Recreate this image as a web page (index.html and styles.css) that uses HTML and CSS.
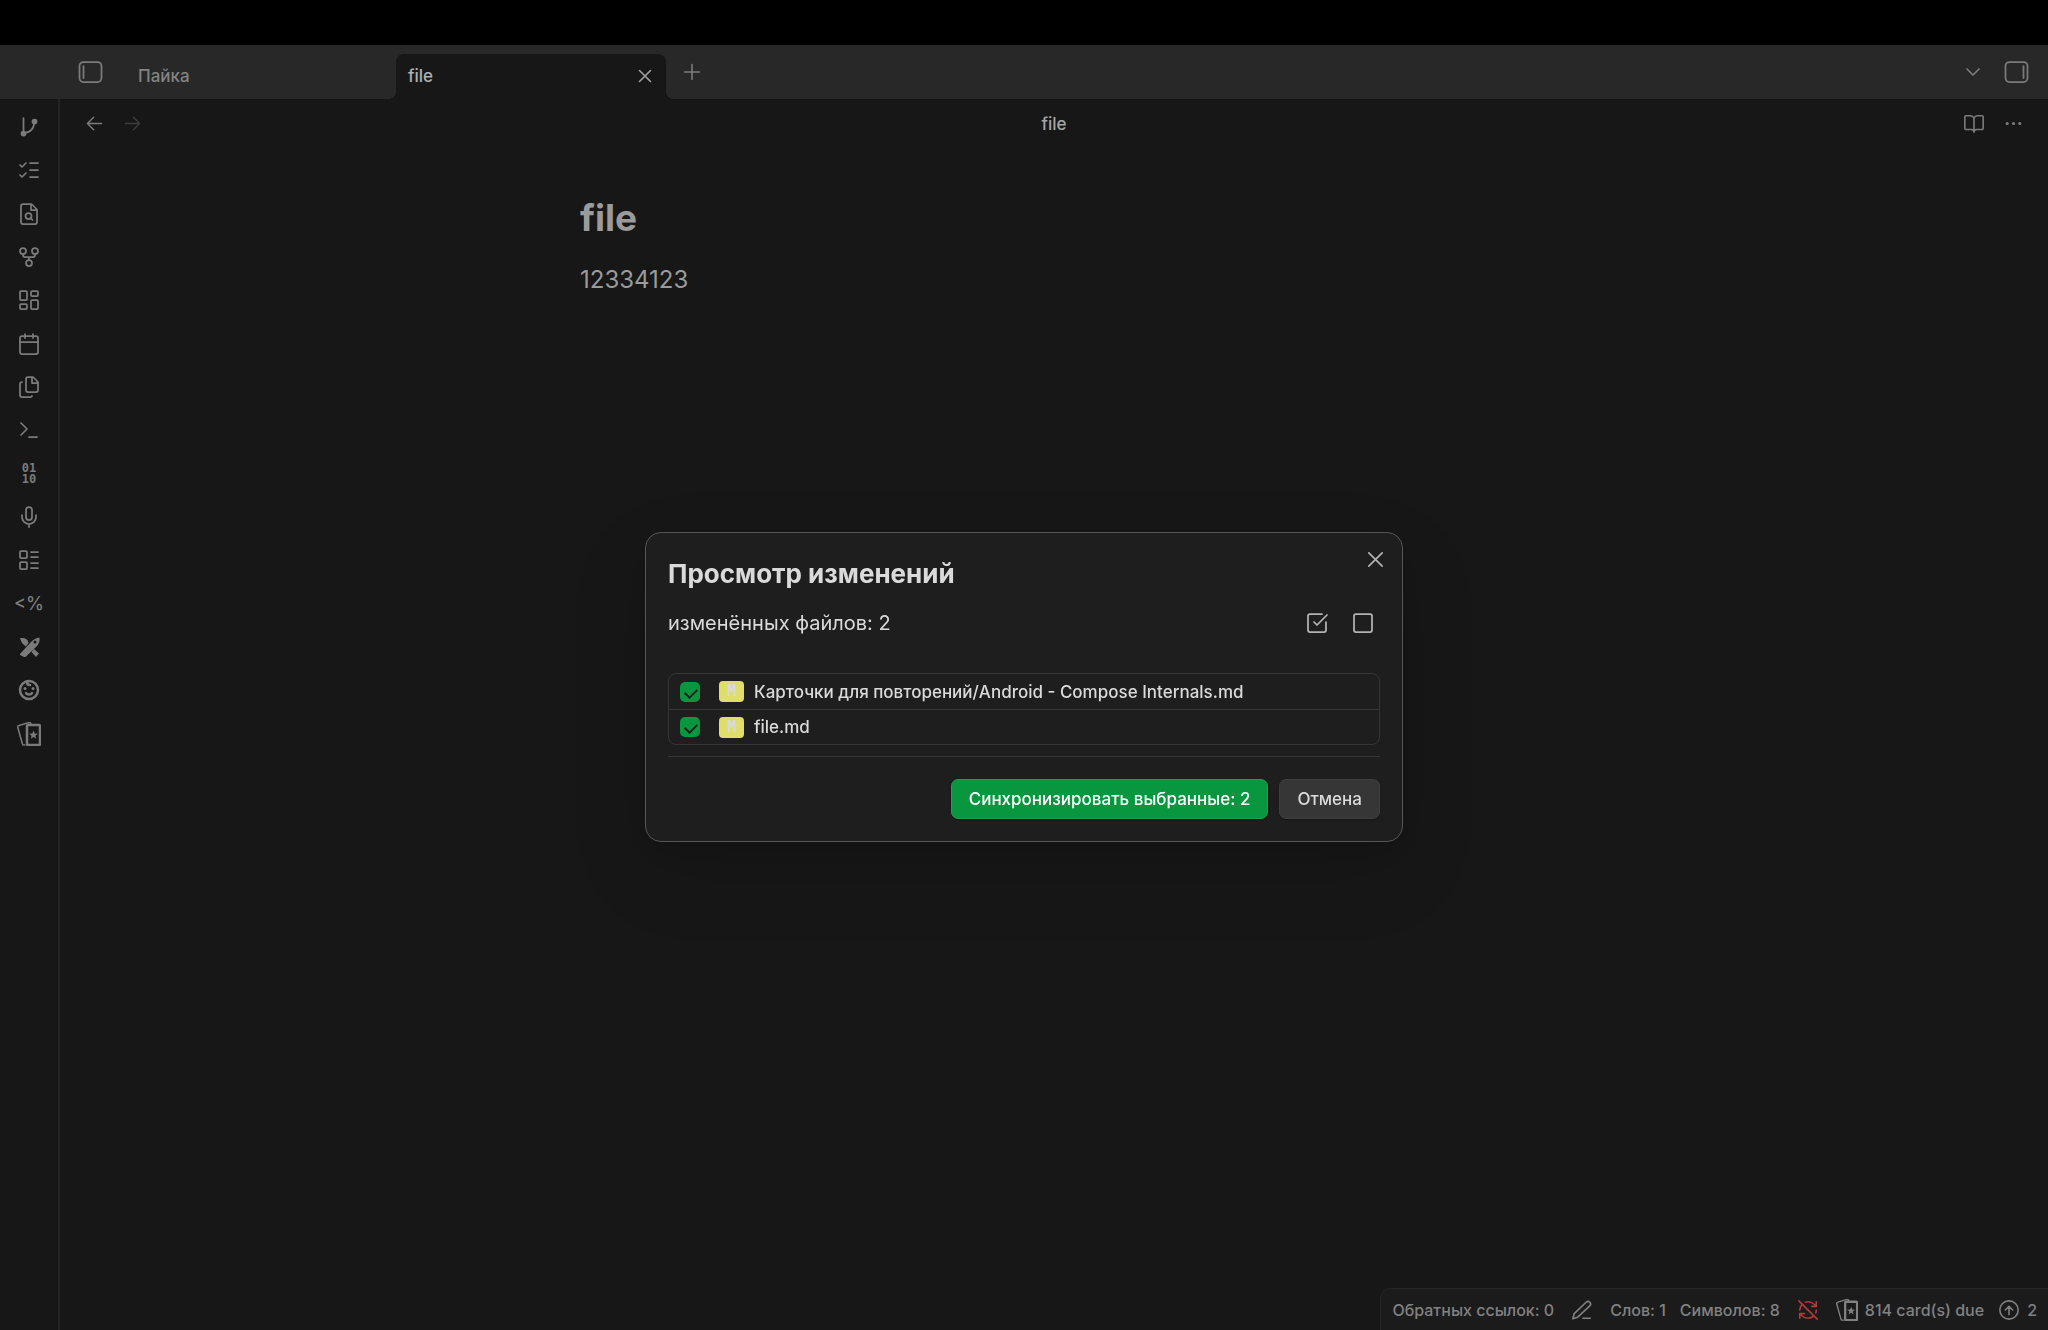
FILE: index.html
```html
<!DOCTYPE html>
<html lang="ru">
<head>
  <meta charset="UTF-8">
  <title>file</title>
  <link rel="stylesheet" href="styles.css">
</head>
<body>

  <div class="screen-edge"></div>

  <header class="titlebar">
    <button class="icon-button sidebar-toggle" aria-label="Левая панель">
      <svg class="icon panel-icon" viewBox="0 0 24 24"><rect x="1" y="2" width="22" height="20" rx="4"/><path d="M5 6v12"/></svg>
    </button>
    <nav class="tabs">
      <div class="tab"><span>Пайка</span></div>
      <div class="tab tab-active">
        <span>file</span>
        <button class="icon-button" aria-label="Закрыть вкладку">
          <svg class="icon" viewBox="0 0 24 24"><path d="M18 6 6 18M6 6l12 12"/></svg>
        </button>
      </div>
    </nav>
    <button class="icon-button new-tab" aria-label="Новая вкладка">
      <svg class="icon" viewBox="0 0 24 24"><path d="M4 12h16M12 4v16"/></svg>
    </button>
    <div class="titlebar-right">
      <button class="icon-button" aria-label="Список вкладок">
        <svg class="icon" viewBox="0 0 24 24"><path d="m6 9 6 6 6-6"/></svg>
      </button>
      <button class="icon-button" aria-label="Правая панель">
        <svg class="icon panel-icon" viewBox="0 0 24 24"><rect x="1" y="2" width="22" height="20" rx="4"/><path d="M19 6v12"/></svg>
      </button>
    </div>
  </header>

  <div class="workspace">
    <aside class="ribbon">
      <div class="ribbon-actions">
        <button class="icon-button" aria-label="Git">
          <svg class="icon" viewBox="0 0 24 24"><path d="M6.500 3v15M6.500 18C14 18 17 14 17.500 6"/><circle class="solid" cx="6.500" cy="18.500" r="2"/><circle class="solid" cx="17.500" cy="6.500" r="2"/></svg>
        </button>
        <button class="icon-button" aria-label="Задачи">
          <svg class="icon" viewBox="0 0 24 24"><path d="m3 17 2 2 4-4M3 7l2 2 4-4M13 5h8M13 12h8M13 19h8"/></svg>
        </button>
        <button class="icon-button" aria-label="Поиск файла">
          <svg class="icon" viewBox="0 0 24 24"><path d="M14.500 2H6a2 2 0 0 0-2 2v16a2 2 0 0 0 2 2h12a2 2 0 0 0 2-2V7.500zM14 2v6h6"/><circle cx="11.500" cy="14" r="3"/><path d="m13.500 16 2 2"/></svg>
        </button>
        <button class="icon-button" aria-label="Граф">
          <svg class="icon" viewBox="0 0 24 24"><circle cx="12" cy="18" r="3"/><circle cx="6" cy="6" r="3"/><circle cx="18" cy="6" r="3"/><path d="M18 9v1a2 2 0 0 1-2 2H8a2 2 0 0 1-2-2V9M12 12v3"/></svg>
        </button>
        <button class="icon-button" aria-label="Холст">
          <svg class="icon" viewBox="0 0 24 24"><rect x="3" y="3" width="7" height="9" rx="1"/><rect x="14" y="3" width="7" height="5" rx="1"/><rect x="14" y="12" width="7" height="9" rx="1"/><rect x="3" y="16" width="7" height="5" rx="1"/></svg>
        </button>
        <button class="icon-button" aria-label="Календарь">
          <svg class="icon" viewBox="0 0 24 24"><rect x="3" y="4" width="18" height="18" rx="2"/><path d="M16 2v4M8 2v4M3 10h18"/></svg>
        </button>
        <button class="icon-button" aria-label="Шаблоны">
          <svg class="icon" viewBox="0 0 24 24"><path d="M16 2h-5a2 2 0 0 0-2 2v11a2 2 0 0 0 2 2h8a2 2 0 0 0 2-2V7zM15 2v6h6M5 7a2 2 0 0 0-2 2v11a2 2 0 0 0 2 2h8a2 2 0 0 0 2-1"/></svg>
        </button>
        <button class="icon-button" aria-label="Команды">
          <svg class="icon" viewBox="0 0 24 24"><path d="m4 17 6-6-6-6M12 19h8"/></svg>
        </button>
        <button class="icon-button binary" aria-label="Двоичный код"><span>01</span><span>10</span></button>
        <button class="icon-button" aria-label="Запись">
          <svg class="icon" viewBox="0 0 24 24"><path d="M12 2a3 3 0 0 0-3 3v7a3 3 0 0 0 6 0V5a3 3 0 0 0-3-3zM19 10v2a7 7 0 0 1-14 0v-2M12 19v3"/></svg>
        </button>
        <button class="icon-button" aria-label="Список">
          <svg class="icon" viewBox="0 0 24 24"><rect x="3" y="3" width="7" height="7" rx="1"/><rect x="3" y="14" width="7" height="7" rx="1"/><path d="M14 4h7M14 9h7M14 15h7M14 20h7"/></svg>
        </button>
        <button class="icon-button templater" aria-label="Templater">&lt;%</button>
        <button class="icon-button" aria-label="Excalidraw">
          <svg class="icon" viewBox="0 0 24 24"><path class="fill" d="M3 3c5-.5 8 1 8.500 5L9 11.500 6.500 9.500C4.500 8 4 6 3 3zM17 14l5 4.500-3 3.500-4.500-5zM3 19 14 7c2.500-2.500 5-4 8.500-4.500.5 4-.5 6.500-3 9L8.500 22H7l-4-2z"/><circle class="hole" cx="18" cy="7" r="1.500"/></svg>
        </button>
        <button class="icon-button" aria-label="Профиль">
          <svg class="icon" viewBox="0 0 24 24"><circle class="heavy" cx="12" cy="12" r="9"/><path class="heavy" d="M11 3c-2 3 0 4 2 4M9 15c1 2 5 2 6 0"/><circle class="fill" cx="8" cy="10.500" r="1.500"/><circle class="fill" cx="16" cy="10.500" r="1.500"/></svg>
        </button>
        <button class="icon-button" aria-label="Карточки">
          <svg class="icon" viewBox="0 0 24 24"><path class="thin" d="M8 23H6.500a1 1 0 0 1-1-.8L.800 5.500A1.500 1.500 0 0 1 2 3.500l10-3q1.500-.3 2 1.500"/><rect class="heavy" x="10" y="3" width="13" height="20" rx="1"/><path class="fill" d="m16.500 8.500 1.200 3 3.100.2-2.400 2 .8 3.100-2.700-1.700-2.700 1.700.8-3.100-2.400-2 3.100-.2z"/></svg>
        </button>
      </div>
    </aside>

    <main class="note">
      <div class="view-header">
        <div class="view-actions">
          <button class="icon-button" aria-label="Назад">
            <svg class="icon" viewBox="0 0 24 24"><path d="m11 4-8 8 8 8M3 12h18"/></svg>
          </button>
          <button class="icon-button disabled" aria-label="Вперёд">
            <svg class="icon" viewBox="0 0 24 24"><path d="m13 4 8 8-8 8M21 12H3"/></svg>
          </button>
        </div>
        <div class="view-title">file</div>
        <div class="view-actions view-actions-right">
          <button class="icon-button" aria-label="Режим чтения">
            <svg class="icon book-icon" viewBox="0 0 24 24"><path d="M12 7v14M3 18a1 1 0 0 1-1-1V4a1 1 0 0 1 1-1h5a4 4 0 0 1 4 4 4 4 0 0 1 4-4h5a1 1 0 0 1 1 1v13a1 1 0 0 1-1 1h-6a3 3 0 0 0-3 3 3 3 0 0 0-3-3z"/></svg>
          </button>
          <button class="icon-button" aria-label="Ещё">
            <svg class="icon" viewBox="0 0 24 24"><circle class="fill" cx="4" cy="12" r="2"/><circle class="fill" cx="12" cy="12" r="2"/><circle class="fill" cx="20" cy="12" r="2"/></svg>
          </button>
        </div>
      </div>
      <article class="note-body">
        <h1>file</h1>
        <p>12334123</p>
      </article>
    </main>
  </div>

  <footer class="status-bar">
    <span>Обратных ссылок: 0</span>
    <svg class="icon status-pen" viewBox="0 0 24 24"><path d="M13 21h8M16.500 3.500a2.800 2.800 0 0 1 4 4L7 20l-5 1.500L3.500 16z"/></svg>
    <span>Слов: 1</span>
    <span>Символов: 8</span>
    <svg class="icon status-sync" viewBox="0 0 24 24"><path d="M21 8l-2.300-2.300A9.700 9.700 0 0 0 12 3c-1 0-2 .2-2.900.5M8 16H3v5M3 12c0-2.500 1-4.700 2.600-6.400M3 16l2.300 2.300A9.700 9.700 0 0 0 12 21c2.500 0 4.700-1 6.400-2.600M21 12c0 1-.2 2-.5 2.900M21 3v5h-5M22 22 2 2"/></svg>
    <span class="status-group">
      <svg class="icon" viewBox="0 0 24 24"><path class="thin" d="M8 23H6.500a1 1 0 0 1-1-.8L.800 5.500A1.500 1.500 0 0 1 2 3.500l10-3q1.500-.3 2 1.500"/><rect class="heavy" x="10" y="3" width="13" height="20" rx="1"/><path class="fill" d="m16.500 8.500 1.200 3 3.100.2-2.400 2 .8 3.100-2.700-1.700-2.700 1.700.8-3.100-2.400-2 3.100-.2z"/></svg>
      814 card(s) due
    </span>
    <span class="status-group">
      <svg class="icon" viewBox="0 0 24 24"><circle cx="12" cy="12" r="10"/><path d="m16 12-4-4-4 4M12 17V8"/></svg>
      2
    </span>
  </footer>

  <div class="modal-container">
    <div class="modal" role="dialog" aria-labelledby="modalTitle">
      <button class="icon-button modal-close" aria-label="Закрыть">
        <svg class="icon" viewBox="0 0 24 24"><path d="M19 5 5 19M5 5l14 14"/></svg>
      </button>
      <h2 id="modalTitle">Просмотр изменений</h2>
      <div class="summary">
        <span>изменённых файлов: 2</span>
        <div class="summary-actions">
          <button class="icon-button" aria-label="Выбрать все">
            <svg class="icon" viewBox="0 0 24 24"><path d="M21 11v8a2 2 0 0 1-2 2H5a2 2 0 0 1-2-2V5a2 2 0 0 1 2-2h12M9 11l3 3L22 4"/></svg>
          </button>
          <button class="icon-button" aria-label="Снять выбор">
            <svg class="icon" viewBox="0 0 24 24"><rect x="3" y="3" width="18" height="18" rx="2"/></svg>
          </button>
        </div>
      </div>
      <div class="file-list">
        <label class="file-row">
          <input type="checkbox" checked>
          <span class="badge">M</span>
          <span>Карточки для повторений/Android - Compose Internals.md</span>
        </label>
        <label class="file-row">
          <input type="checkbox" checked>
          <span class="badge">M</span>
          <span>file.md</span>
        </label>
      </div>
      <div class="modal-buttons">
        <button class="button button-cta">Синхронизировать выбранные: 2</button>
        <button class="button">Отмена</button>
      </div>
    </div>
  </div>

</body>
</html>
```

FILE: styles.css
```css
* {
  box-sizing: border-box;
}
body {
  margin: 0;
  height: 100vh;
  display: flex;
  flex-direction: column;
  overflow: hidden;
  background-color: #171717;
  color: #a0a0a0;
  font-family: Inter, "Liberation Sans", sans-serif;
  font-size: 17px;
  font-weight: 500;
}
button,
input {
  font: inherit;
  margin: 0;
}
.icon {
  width: 24px;
  height: 24px;
  display: block;
  flex: none;
  fill: none;
  stroke: currentColor;
  stroke-width: 1.75;
  stroke-linecap: round;
  stroke-linejoin: round;
}
.icon .solid {
  fill: currentColor;
}
.icon .fill {
  fill: currentColor;
  stroke: none;
}
.icon .hole {
  fill: #171717;
  stroke: none;
}
.icon .heavy {
  stroke-width: 2.5;
}
.icon .thin {
  stroke-width: 1.5;
}
.icon-button {
  display: flex;
  align-items: center;
  justify-content: center;
  padding: 0;
  border: none;
  background: none;
  color: #7b7b7b;
  cursor: pointer;
}
.icon-button.disabled {
  color: #3c3c3c;
}

/* title bar and tabs */
.screen-edge {
  height: 45px;
  flex: none;
  background-color: #000;
}
.titlebar {
  height: 54px;
  flex: none;
  display: flex;
  align-items: center;
  background-color: #282828;
  padding-right: 19px;
}
.sidebar-toggle {
  width: 48px;
  margin-left: 66px;
}
.titlebar > .icon-button,
.titlebar-right {
  height: 54px;
}
.tabs {
  display: flex;
  align-self: flex-end;
  margin-left: 12px;
}
.tab {
  width: 270px;
  height: 45px;
  padding: 0 10px 2px 12px;
  display: flex;
  align-items: center;
  justify-content: space-between;
  color: #838383;
}
.tab-active {
  position: relative;
  background-color: #171717;
  border-radius: 8px 8px 0 0;
  color: #b0b0b0;
}
.tab-active::before,
.tab-active::after {
  content: "";
  position: absolute;
  bottom: 0;
  width: 8px;
  height: 8px;
}
.tab-active::before {
  right: 100%;
  background: radial-gradient(circle at 0 0, transparent 8px, #171717 8px);
}
.tab-active::after {
  left: 100%;
  background: radial-gradient(circle at 100% 0, transparent 8px, #171717 8px);
}
.tab .icon {
  width: 22px;
  height: 22px;
}
.tab .icon-button {
  color: #a0a0a0;
}
.new-tab {
  width: 52px;
}
.new-tab .icon {
  width: 22px;
  height: 22px;
}
.titlebar .panel-icon {
  width: 25px;
}
.titlebar-right {
  margin-left: auto;
  display: flex;
  align-items: center;
  gap: 19px;
}

/* workspace */
.workspace {
  flex: 1;
  display: flex;
  min-height: 0;
}
.ribbon {
  width: 60px;
  padding-top: 16px;
  border-right: 2px solid #242424;
}
.ribbon-actions {
  height: 631px;
  display: flex;
  flex-direction: column;
  justify-content: space-between;
}
.ribbon .icon-button {
  width: 100%;
  height: 24px;
}
.ribbon .binary {
  flex-direction: column;
  font-family: "DejaVu Sans Mono", monospace;
  font-size: 12px;
  font-weight: bold;
  line-height: 11px;
}
.ribbon .templater {
  font-size: 18px;
}
.note {
  flex: 1;
  min-width: 0;
}
.view-header {
  height: 49px;
  display: grid;
  grid-template-columns: 1fr auto 1fr;
  align-items: center;
  padding: 0 25px;
}
.view-actions {
  display: flex;
  align-items: center;
  gap: 19px;
}
.view-actions .icon {
  width: 19px;
  height: 19px;
}
.view-actions .book-icon {
  width: 22px;
  height: 22px;
}
.view-actions-right {
  justify-content: flex-end;
}
.view-title {
  color: #a6a6a6;
}
.note-body {
  max-width: 948px;
  margin: 0 auto;
  padding-top: 46px;
}
.note-body h1 {
  margin: 0;
  font-size: 37px;
  line-height: 48px;
  color: #9b9b9b;
}
.note-body p {
  margin: 20px 0 0;
  font-size: 24px;
  font-weight: 400;
  line-height: 36px;
  color: #9b9b9b;
}

/* status bar */
.status-bar {
  position: fixed;
  right: 0;
  bottom: 0;
  height: 42px;
  display: flex;
  align-items: center;
  padding: 0 11px;
  border: 1px solid #262626;
  border-width: 1px 0 0 1px;
  border-radius: 11px 0 0 0;
  background-color: #1b1b1b;
  color: #818181;
  font-size: 16px;
  gap: 14px;
}
.status-bar .icon {
  width: 22px;
  height: 22px;
}
.status-bar .status-pen,
.status-bar .status-sync {
  margin: 0 3px;
}
.status-bar .status-sync {
  color: #b5383a;
}
.status-group {
  display: flex;
  align-items: center;
  gap: 7px;
}

/* changes dialog */
.modal-container {
  position: fixed;
  inset: 44px 0 0;
  display: flex;
  align-items: center;
  justify-content: center;
}
.modal {
  position: relative;
  width: 758px;
  max-width: 90vw;
  padding: 22px;
  border: 1px solid #575757;
  border-radius: 16px;
  background-color: #1e1e1e;
  color: #dadada;
  box-shadow: 0 2px 8px rgba(0, 0, 0, 0.07), 0 8px 32px rgba(0, 0, 0, 0.11), 0 30px 80px rgba(0, 0, 0, 0.12);
}
.modal .icon-button {
  color: #b3b3b3;
}
.modal-close {
  position: absolute;
  top: 15px;
  right: 15px;
}
.modal-close .icon {
  width: 23px;
  height: 23px;
}
.modal h2 {
  margin: 0;
  font-size: 26px;
  line-height: 38px;
  font-weight: 700;
}
.summary {
  display: flex;
  align-items: center;
  justify-content: space-between;
  height: 24px;
  margin: 18px 0 38px;
  font-size: 20px;
  font-weight: 400;
}
.summary-actions {
  display: flex;
  gap: 22px;
  padding-right: 5px;
}
.file-list {
  border: 1px solid #363636;
  border-radius: 8px;
}
.file-row {
  display: flex;
  align-items: center;
  height: 35px;
  padding-left: 11px;
}
.file-row + .file-row {
  border-top: 1px solid #363636;
}
.file-row input {
  appearance: none;
  position: relative;
  width: 20px;
  height: 20px;
  border-radius: 5px;
  background-color: #08963f;
}
.file-row input::after {
  content: "";
  position: absolute;
  left: 7px;
  top: 4px;
  width: 6px;
  height: 10px;
  border: solid #1e1e1e;
  border-width: 0 2px 2px 0;
  transform: rotate(45deg);
}
.badge {
  width: 25px;
  height: 21px;
  margin: 0 10px 0 19px;
  border-radius: 4px;
  background-color: #dfde6b;
  color: #dadada;
  font-family: "DejaVu Sans Mono", monospace;
  font-size: 15px;
  font-weight: bold;
  line-height: 20px;
  text-align: center;
}
.modal-buttons {
  display: flex;
  justify-content: flex-end;
  gap: 11px;
  margin-top: 11px;
  padding-top: 22px;
  border-top: 1px solid #363636;
}
.button {
  height: 40px;
  padding: 0 17px;
  border: 1px solid #3e3e3e;
  border-radius: 7px;
  background-color: #363636;
  color: #dadada;
  box-shadow: 0 1px 2px rgba(0, 0, 0, 0.3);
  cursor: pointer;
}
.button-cta {
  border-color: #1ba04f;
  background-color: #08963f;
  color: #fff;
}
```
